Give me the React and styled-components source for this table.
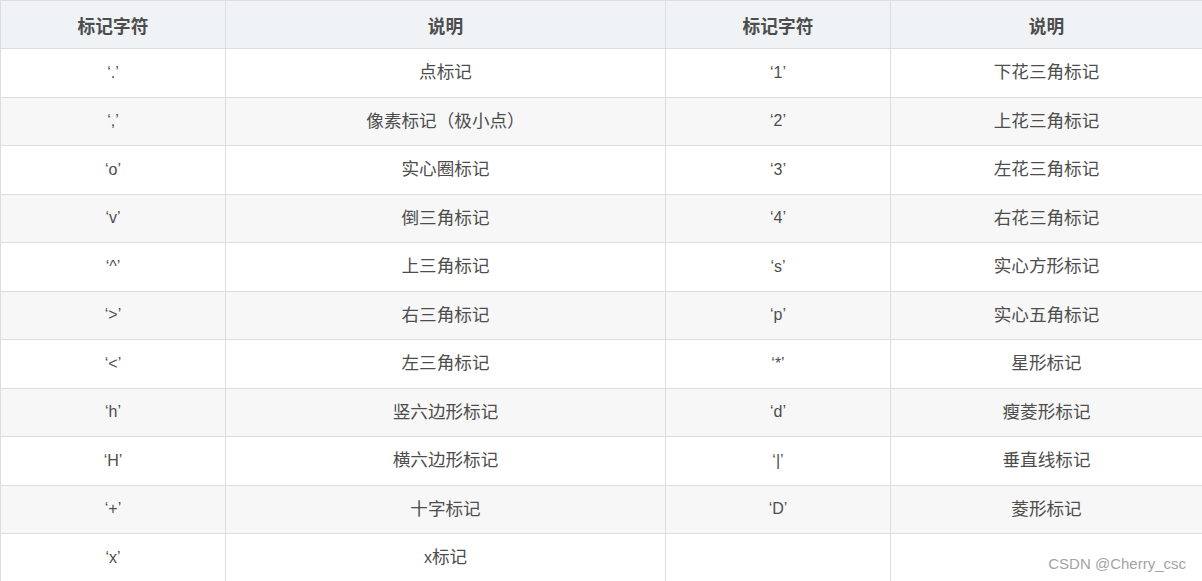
import React from "react";
import styled, { createGlobalStyle } from "styled-components";

const GlobalStyle = createGlobalStyle`
  html, body {
    margin: 0;
    padding: 0;
    background: #fff;
  }
  body {
    font-family: "Liberation Sans", Arial, "Noto Sans CJK SC", sans-serif;
    color: #4d4d4d;
  }
`;

const Page = styled.div`
  position: relative;
  width: 1202px;
  height: 581px;
  overflow: hidden;
`;

const Table = styled.table`
  width: 1202px;
  border-collapse: collapse;
  table-layout: fixed;
  font-size: 16px;
`;

const HeadRow = styled.tr`
  height: 48px;
  background: #eff3f5;
`;

const Row = styled.tr`
  height: 48.5px;
  background: ${props => (props.striped ? "#f7f7f7" : "#fff")};
`;

const Th = styled.th`
  border: 1px solid #dddddd;
  padding: 0 8px;
  font-size: 17.7px;
  font-weight: 700;
  color: #4d4d4d;
  text-align: center;
  vertical-align: middle;
`;

const Td = styled.td`
  border: 1px solid #dddddd;
  padding: 0 8px;
  text-align: center;
  vertical-align: middle;
  line-height: 24px;
`;

// Chinese glyphs render a little larger than the latin text in the source
const Cn = styled.span`
  font-size: 17.6px;
`;

const Watermark = styled.div`
  position: absolute;
  right: 16px;
  bottom: 9px;
  font-size: 15px;
  color: #a3a3a3;
  font-family: "Liberation Sans", Arial, sans-serif;
`;

const rows = [
  ["‘.’", "点标记", "‘1’", "下花三角标记"],
  ["‘,’", "像素标记（极小点）", "‘2’", "上花三角标记"],
  ["‘o’", "实心圈标记", "‘3’", "左花三角标记"],
  ["‘v’", "倒三角标记", "‘4’", "右花三角标记"],
  ["‘^’", "上三角标记", "‘s’", "实心方形标记"],
  ["‘>’", "右三角标记", "‘p’", "实心五角标记"],
  ["‘<’", "左三角标记", "‘*’", "星形标记"],
  ["‘h’", "竖六边形标记", "‘d’", "瘦菱形标记"],
  ["‘H’", "横六边形标记", "‘|’", "垂直线标记"],
  ["‘+’", "十字标记", "‘D’", "菱形标记"],
  ["‘x’", "x标记", "", ""]
];

const Desc = ({ text }) =>
  text.startsWith("x") ? (
    <>
      x<Cn>{text.slice(1)}</Cn>
    </>
  ) : (
    <Cn>{text}</Cn>
  );

const App = () => (
  <>
    <GlobalStyle />
    <Page>
      <Table>
        <colgroup>
          <col style={{ width: 225 }} />
          <col style={{ width: 440 }} />
          <col style={{ width: 225 }} />
          <col style={{ width: 312 }} />
        </colgroup>
        <thead>
          <HeadRow>
            <Th>标记字符</Th>
            <Th>说明</Th>
            <Th>标记字符</Th>
            <Th>说明</Th>
          </HeadRow>
        </thead>
        <tbody>
          {rows.map(([m1, d1, m2, d2], i) => (
            <Row key={i} striped={i % 2 === 1}>
              <Td>{m1}</Td>
              <Td>
                <Desc text={d1} />
              </Td>
              <Td>{m2}</Td>
              <Td>
                <Desc text={d2} />
              </Td>
            </Row>
          ))}
        </tbody>
      </Table>
      <Watermark>CSDN @Cherry_csc</Watermark>
    </Page>
  </>
);

export default App;
